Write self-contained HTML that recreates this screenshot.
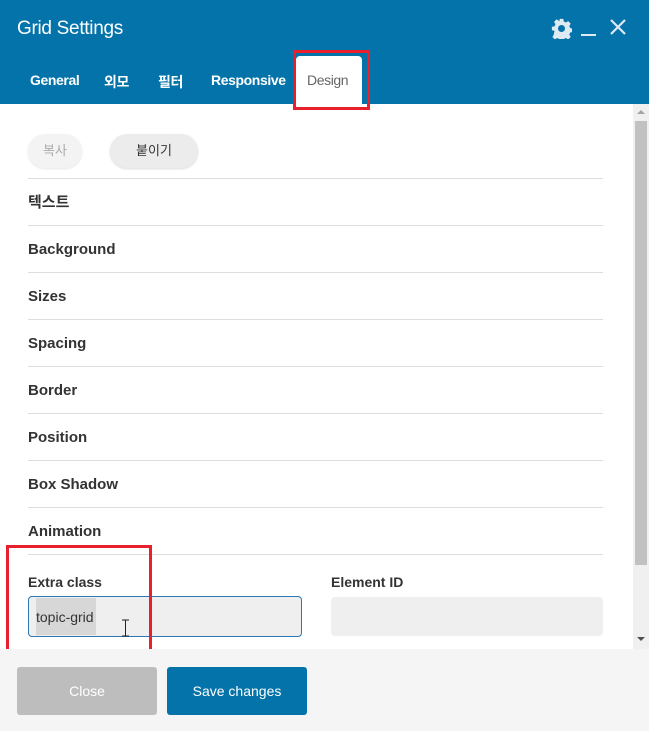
<!DOCTYPE html>
<html><head><meta charset="utf-8">
<style>
*{margin:0;padding:0;box-sizing:border-box}
body{width:649px;height:731px;overflow:hidden;background:#fff;font-family:"Liberation Sans","Noto Sans CJK KR",sans-serif;position:relative}
.hdr{position:absolute;left:0;top:0;width:649px;height:104px;background:#0473aa}
.title{position:absolute;left:17px;top:18px;color:#fff;font-size:19px;letter-spacing:-0.3px}
.tab{position:absolute;top:72px;color:#fff;font-size:14px;font-weight:bold;letter-spacing:-0.4px}
.dtab{position:absolute;left:296px;top:56px;width:66px;height:48px;background:#fff;border-radius:4px 4px 0 0}
.red{position:absolute;border:3px solid #e8202e}
.btn{position:absolute;top:134px;height:34px;border-radius:17px;font-size:13px;text-align:center;line-height:34px}
.sec{position:absolute;left:28px;width:575px;height:47px;border-top:1px solid #ddd;font-size:15px;font-weight:bold;color:#333;line-height:46px}
.lbl{position:absolute;top:574px;font-size:14px;font-weight:bold;color:#333}
.inp{position:absolute;top:597px;width:272px;height:39px;background:#efefef;border-radius:4px}
.foot{position:absolute;left:0;top:649px;width:649px;height:82px;background:#f5f5f5}
.fb{position:absolute;top:667px;width:140px;height:48px;border-radius:3px;color:#fff;font-size:14px;text-align:center;line-height:48px}
</style></head><body>
<div class="hdr">
<div class="title">Grid Settings</div>
<svg style="position:absolute;left:551px;top:18px" width="21" height="21" viewBox="0 0 24 24"><path fill="#dfeaf2" d="M10 1h4l.6 3 2.4 1.2 2.7-1.6 2.8 2.8-1.6 2.7 1.1 2.4 3 .5v4l-3 .6-1.1 2.4 1.6 2.7-2.8 2.8-2.7-1.6-2.4 1.1-.6 3h-4l-.5-3-2.4-1.1-2.7 1.6-2.8-2.8 1.6-2.7L4 14.6 1 14v-4l3-.5 1.1-2.4-1.6-2.7 2.8-2.8 2.7 1.6L9.5 4z M12 8a4 4 0 1 0 0 8 4 4 0 1 0 0-8z" fill-rule="evenodd"/></svg>
<div style="position:absolute;left:581px;top:34px;width:15px;height:2px;background:#dfeaf2"></div>
<svg style="position:absolute;left:610px;top:19px" width="16" height="16" viewBox="0 0 16 16"><path d="M1 1L15 15M15 1L1 15" stroke="#dfeaf2" stroke-width="2.2"/></svg>
<div class="tab" style="left:30px">General</div>
<div class="tab" style="left:104px">외모</div>
<div class="tab" style="left:158px">필터</div>
<div class="tab" style="left:211px">Responsive</div>
<div class="dtab"></div>
<div class="tab" style="left:307px;color:#666;font-weight:normal">Design</div>
</div>
<div class="red" style="left:293px;top:50px;width:77px;height:60px"></div>
<div class="btn" style="left:28px;width:54px;background:#f3f3f3;color:#aaa;box-shadow:0 1px 2px rgba(0,0,0,.1)">복사</div>
<div class="btn" style="left:110px;width:88px;background:#ececec;color:#333;box-shadow:0 1px 2px rgba(0,0,0,.15)">붙이기</div>
<div class="sec" style="top:178px;line-height:48px">텍스트</div>
<div class="sec" style="top:225px;line-height:48px">Background</div>
<div class="sec" style="top:272px;line-height:48px">Sizes</div>
<div class="sec" style="top:319px;line-height:48px">Spacing</div>
<div class="sec" style="top:366px;line-height:48px">Border</div>
<div class="sec" style="top:413px;line-height:48px">Position</div>
<div class="sec" style="top:460px;line-height:48px">Box Shadow</div>
<div class="sec" style="top:507px;line-height:48px">Animation</div>
<div style="position:absolute;left:28px;top:554px;width:575px;border-top:1px solid #ddd"></div>
<div class="lbl" style="left:28px">Extra class</div>
<div class="lbl" style="left:331px">Element ID</div>
<div class="inp" style="left:28px;top:596px;width:274px;height:41px;border:1px solid #2a78b5"></div>
<div style="position:absolute;left:36px;top:598px;width:60px;height:37px;background:#d7d7d7"></div>
<div style="position:absolute;left:36px;top:609px;font-size:14px;color:#333">topic-grid</div>
<svg style="position:absolute;left:121px;top:619px" width="9" height="18" viewBox="0 0 9 18"><path d="M1 1h7M1 17h7M4.5 1v16" stroke="#222" stroke-width="1"/></svg>
<div class="inp" style="left:331px"></div>
<div class="red" style="left:6px;top:545px;width:146px;height:107px"></div>
<div style="position:absolute;left:633px;top:104px;width:16px;height:545px;background:#f0f0f0"></div>
<div style="position:absolute;left:635px;top:121px;width:12px;height:444px;background:#c1c1c1"></div>
<div style="position:absolute;left:637px;top:110px;border:4px solid transparent;border-bottom:4px solid #a3a3a3;border-top:0"></div>
<div style="position:absolute;left:637px;top:637px;border:4px solid transparent;border-top:4px solid #505050;border-bottom:0"></div>
<div class="foot"></div>
<div class="fb" style="left:17px;background:#bdbdbd">Close</div>
<div class="fb" style="left:167px;background:#0473aa">Save changes</div>
</body></html>
